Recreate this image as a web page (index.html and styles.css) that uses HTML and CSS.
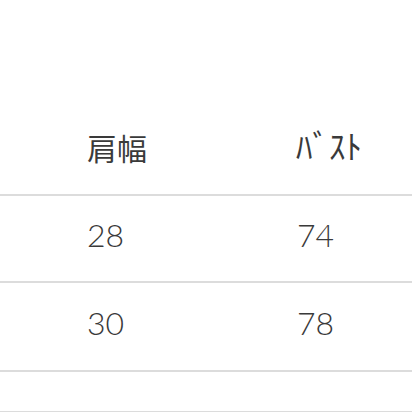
FILE: index.html
```html
<!DOCTYPE html>
<html lang="ja">
<head>
<meta charset="utf-8">
<link rel="stylesheet" href="styles.css">
</head>
<body>
<div class="table">
  <div class="row head">
    <div class="cell">肩幅</div>
    <div class="cell kana">ﾊﾞｽﾄ</div>
  </div>
  <div class="row r1">
    <div class="cell num">28</div>
    <div class="cell num">74</div>
  </div>
  <div class="row r2">
    <div class="cell num">30</div>
    <div class="cell num">78</div>
  </div>
  <div class="row r3"></div>
</div>
</body>
</html>
```
FILE: styles.css
```css
html, body {
  margin: 0;
  padding: 0;
  background: #ffffff;
}
body {
  width: 412px;
  height: 412px;
  overflow: hidden;
  color: #3a3a3a;
}
.table {
  display: flex;
  flex-direction: column;
}
.row {
  display: grid;
  grid-template-columns: 210px 1fr;
  padding-left: 87px;
  border-bottom: 2px solid #dcdcdc;
  box-sizing: content-box;
}
.head {
  height: 62px;
  padding-top: 132px;
  font-family: "Noto Sans CJK JP", "Noto Sans", sans-serif;
  font-size: 30px;
  line-height: 30px;
}
.kana {
  font-size: 33px;
  margin-left: -1px;
  margin-top: -2px;
}
.r1 {
  height: 62px;
  padding-top: 23px;
}
.r2 {
  height: 63px;
  padding-top: 24px;
}
.r3 {
  height: 39px;
}
.num {
  font-family: Lato, "Liberation Sans", sans-serif;
  font-size: 32px;
  line-height: 32px;
  font-weight: 300;
}
```
